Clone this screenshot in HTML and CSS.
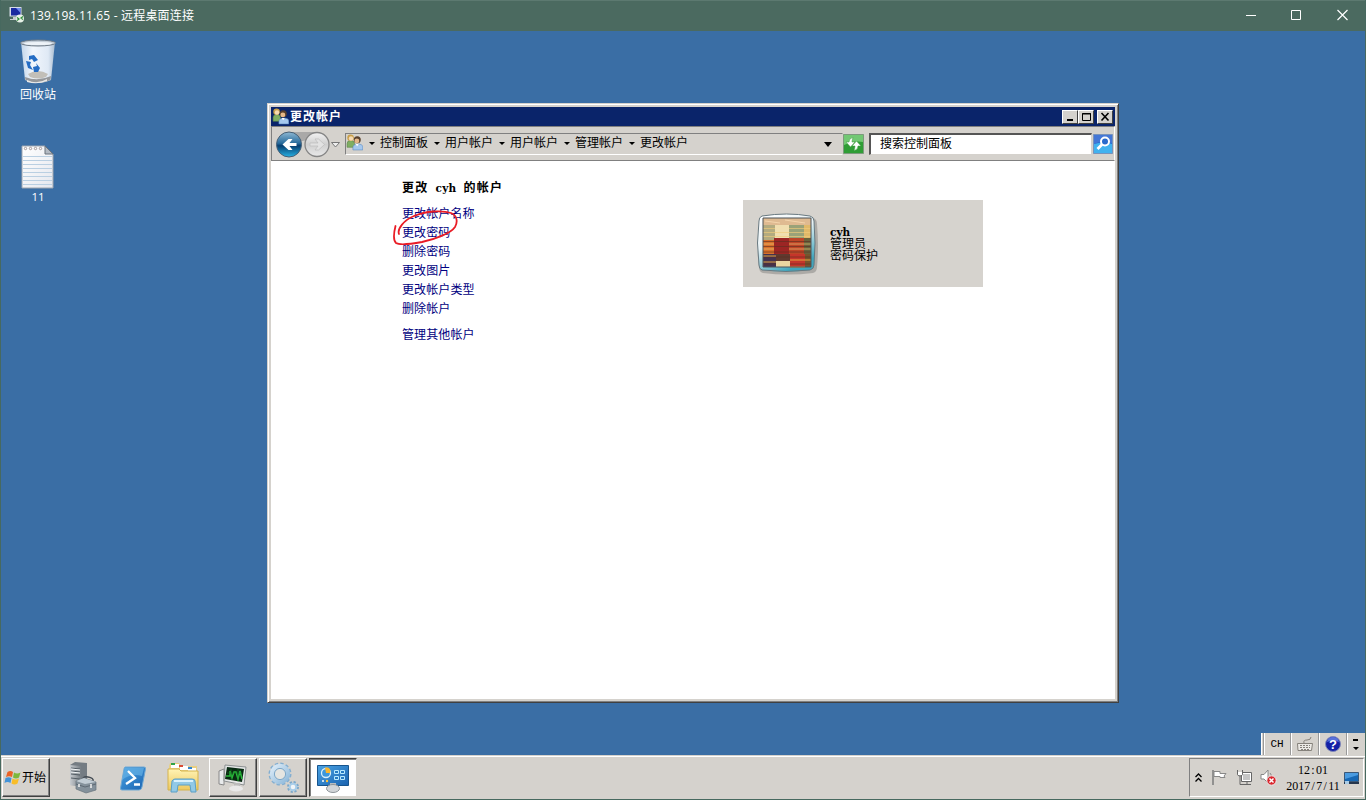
FILE: index.html
```html
<!DOCTYPE html>
<html lang="zh-CN">
<head>
<meta charset="utf-8">
<title>远程桌面连接</title>
<link rel="stylesheet" href="styles.css">
</head>
<body>
<svg class="defs" width="0" height="0">
  <defs>
    <linearGradient id="blueBall" x1="0" y1="0" x2="0" y2="1"><stop offset="0" stop-color="#8fb9d4"/><stop offset=".45" stop-color="#286b9c"/><stop offset=".55" stop-color="#063e70"/><stop offset="1" stop-color="#27b2e4"/></linearGradient>
    <linearGradient id="grayBall" x1="0" y1="0" x2="0" y2="1"><stop offset="0" stop-color="#f2f2f2"/><stop offset=".5" stop-color="#cfcfcf"/><stop offset="1" stop-color="#e9e9e9"/></linearGradient>
    <linearGradient id="bin" x1="0" y1="0" x2="1" y2="0"><stop offset="0" stop-color="#c3d6ea"/><stop offset=".35" stop-color="#f1f6fc"/><stop offset=".8" stop-color="#dfe9f5"/><stop offset="1" stop-color="#a9bccf"/></linearGradient>
    <linearGradient id="paper" x1="0" y1="0" x2="1" y2="1"><stop offset="0" stop-color="#fff"/><stop offset="1" stop-color="#e4e7ee"/></linearGradient>
    <linearGradient id="frame" x1="0" y1="0" x2=".5" y2="1"><stop offset="0" stop-color="#fff"/><stop offset=".5" stop-color="#e8f2f5"/><stop offset="1" stop-color="#3fa6bd"/></linearGradient>
    <linearGradient id="panel" x1="0" y1="0" x2="1" y2="1"><stop offset="0" stop-color="#4aa3e4"/><stop offset="1" stop-color="#1a63b0"/></linearGradient>
    <linearGradient id="steel" x1="0" y1="0" x2="1" y2="0"><stop offset="0" stop-color="#c8ccd0"/><stop offset="1" stop-color="#757d84"/></linearGradient>
    <linearGradient id="gear" x1="0" y1="0" x2="1" y2="1"><stop offset="0" stop-color="#dcebf7"/><stop offset="1" stop-color="#8fb9da"/></linearGradient>
    <linearGradient id="folder" x1="0" y1="0" x2="0" y2="1"><stop offset="0" stop-color="#fff3b4"/><stop offset="1" stop-color="#ecc85f"/></linearGradient>
    <symbol id="users" viewBox="0 0 16 16">
      <path d="M1 12.500V9q0-3 3.500-3T8 9v3.500z" fill="#7fae63" stroke="#547b42" stroke-width=".5"/>
      <circle cx="4.300" cy="3.500" r="3.100" fill="#c9a04a"/><circle cx="4.700" cy="4.300" r="2.100" fill="#f5d9b2"/>
      <path d="M6.500 15v-2q0-3.500 4.500-3.500T15.800 12v3z" fill="#a5c8ee" stroke="#5283bd" stroke-width=".5"/>
      <circle cx="10.600" cy="5.400" r="3.300" fill="#59402c"/><circle cx="10.200" cy="6.500" r="2.300" fill="#e5b889"/>
      <path d="M9 9.500l1.500 2 1.500-2z" fill="#fff"/>
    </symbol>
  </defs>
</svg>

<header class="rdp-bar">
  <svg class="rdp-icon" width="17" height="17" viewBox="0 0 17 17"><path d="M1.500 1h12v9.500h-12z" fill="#d6dce6"/><path d="M3 2h9.500v7.500H3z" fill="#1a2aa0"/><path d="M8 2h4.500v5z" fill="#6d8bef"/><path d="M5 11h4v2h3v1H2v-1h3z" fill="#c9ccd2"/><circle cx="12" cy="12.500" r="4" fill="#e8f2e8"/><path d="M9 11.500l2 1.500-2 1.500M15 10.500L13 12l2 1.500" fill="none" stroke="#2c8b36" stroke-width="1.200"/></svg>
  <span class="rdp-title">139.198.11.65 - 远程桌面连接</span>
  <svg class="rdp-controls" width="104" height="12" viewBox="0 0 104 12" fill="none" stroke="#fff"><path d="M0 6.500h10"/><path d="M45.500 1.500h9v9h-9z"/><path d="M91.500 1l10 10m0-10l-10 10" stroke-width="1.200"/></svg>
</header>

<main class="desktop">
  <div class="shortcuts">
    <div class="shortcut">
      <svg width="38" height="46" viewBox="0 0 38 46"><path d="M2 3l4 38q13 6 26 0l4-38z" fill="url(#bin)"/><path d="M9 35q10-6 20 0l-2 3q-8 3-16 0z" fill="#c2bfb8"/><path d="M6 38q13 5 26-1l-.5 4q-12.500 6-25 0z" fill="#96989b"/><path d="M8 41q10 5 20-1v2q-10 4-20 1z" fill="#e8e8e8"/><ellipse cx="19" cy="4" rx="17.500" ry="3" fill="#c4ced8" stroke="#707c88"/><ellipse cx="19" cy="4.500" rx="14" ry="1.600" fill="#eef3f8"/><g fill="#246cc4"><path d="M10 17l5-1 4 5-4 2-2-3-3 1z"/><path d="M7 22l5 1-1 3 3 5-5-2z"/><path d="M14 28l4-1-1-3 4 5-2 4-4 0z"/></g></svg>
      <span>回收站</span>
    </div>
    <div class="shortcut">
      <svg width="34" height="44" viewBox="0 0 34 44"><path d="M1 1h23l8 8v34H1z" fill="url(#paper)" stroke="#9da5af"/><path d="M24 1v8h8z" fill="#b3bac3" stroke="#69727c"/><path d="M2 11.500h29M2 15.500h29M2 19.500h29M2 23.500h29M2 27.500h29M2 31.500h29M2 35.500h29M2 39.500h29" stroke="#b9cfe2"/><g fill="#fff" stroke="#9a8e90" stroke-width=".9"><circle cx="4.500" cy="3.500" r="1.200"/><circle cx="9.500" cy="3.500" r="1.200"/><circle cx="14.500" cy="3.500" r="1.200"/><circle cx="19.500" cy="3.500" r="1.200"/></g></svg>
      <span class="latin-name">11</span>
    </div>
  </div>

  <section class="window">
    <div class="titlebar">
      <svg width="17" height="17"><use href="#users"/></svg>
      <h1>更改帐户</h1>
      <div class="win-buttons">
        <i><svg width="12" height="10"><path d="M3 7h6v2H3z"/></svg></i><i><svg width="12" height="10"><path d="M2.500 1.500h8v7h-8zM2 2h9" fill="none" stroke="#000"/></svg></i><i class="close"><svg width="12" height="10"><path d="M2.500 1l7 7.500m0-7.500l-7 7.500" stroke="#000" stroke-width="1.600"/></svg></i>
      </div>
    </div>
    <nav class="toolbar">
      <svg class="travel" width="70" height="30" viewBox="0 0 70 30"><path d="M13 3h29l-5 9q-8-2-14 2z" fill="#aaa9a8"/><circle cx="14" cy="15.500" r="12.500" fill="url(#blueBall)" stroke="#465f75"/><path d="M21.500 14v3h-7l3 4h-4l-6-5.500 6-5.500h4l-3 4z" fill="#fff"/><circle cx="42" cy="15.500" r="12" fill="url(#grayBall)" stroke="#858585" stroke-width="1.300"/><path d="M35 14v3h8l-3 4h3.500l6-5.500-6-5.500H40l3 4z" fill="#e2e2e2" stroke="#bbb" stroke-width=".7"/><path d="M56.500 13.500h8l-4 4.500z" fill="#eee" stroke="#777"/></svg>
      <div class="address">
        <svg width="17" height="17"><use href="#users"/></svg>
        <span class="crumb">控制面板</span><span class="crumb">用户帐户</span><span class="crumb">用户帐户</span><span class="crumb">管理帐户</span><span class="crumb">更改帐户</span>
        <i class="drop"></i>
      </div>
      <svg class="refresh" width="21" height="20" viewBox="0 0 21 20"><path d="M.5 .5h20v19H.5z" fill="#2f9d35" stroke="#7d9a7d"/><path d="M1 1h19v7q-8-2-19 3z" fill="#72c873"/><path d="M10 3.500Q6 4 6 8H3l4.500 5L12 8H9q0-2 1-4.500zM11 16.500q4-.5 4-4.500h3l-4.500-5L9 12h3q0 2-1 4.500z" fill="#fff" stroke="#3b9b3d" stroke-width=".5"/></svg>
      <div class="search">搜索控制面板</div>
      <svg class="go" width="20" height="20" viewBox="0 0 20 20"><path d="M.5 .5h19v19H.5z" fill="#246bd0" stroke="#7893bb"/><path d="M1 10q9-3 18 0v9H1z" fill="#41b2ef"/><path d="M1 1h18v8Q9 6 1 10z" fill="#4477d6"/><circle cx="12" cy="7.500" r="4" fill="#286acc" stroke="#fff" stroke-width="2"/><path d="M9 10.500L4.500 15" stroke="#fff" stroke-width="2.800"/></svg>
    </nav>
    <div class="content">
      <div class="tasks">
        <h2>更改 <b class="latin">cyh</b> 的帐户</h2>
        <a>更改帐户名称</a><a>更改密码</a><a>删除密码</a><a>更改图片</a><a>更改帐户类型</a><a>删除帐户</a>
        <a class="other">管理其他帐户</a>
        <svg class="scribble" width="70" height="40" viewBox="0 0 70 40" fill="none" stroke="#e91c25" stroke-width="1.800" stroke-linecap="round"><path d="M3.500 17C2 23 1 31 4 34c3 2 15 1 26-1 14-3 29-9 33-15 3-5 2-12-4-14C50 1 34 2 22 7 12 11 5 20 7 25"/></svg>
      </div>
      <div class="account">
        <svg width="66" height="66" viewBox="0 0 66 66"><path d="M7 7q25-4 50 0 4 1 4 6 2 22 0 43 0 5-4 6-25 3-50 0-4-1-4-6-3-21 0-43 0-5 4-6z" fill="#9a9895" opacity=".7"/><path d="M6 5q25-4 48 0 4 1 4 5 2 22 0 44 0 4-4 5-24 3-48 0-3-1-3-5-3-22 0-44 0-4 3-5z" fill="url(#frame)" stroke="#697980"/><g transform="translate(-1)"><path d="M8 7h48v49H8z" fill="#ad5936"/><path d="M8 7h48v7H8z" fill="#dfba91"/><path d="M8 14h12v15H8z" fill="#b3ab80"/><path d="M20 14h14v15H20z" fill="#f0deb0"/><path d="M34 14h15v13H34z" fill="#9aa278"/><path d="M49 14h7v13h-7z" fill="#e1b969"/><path d="M8 29h11v14H8z" fill="#d8702b"/><path d="M19 27h15v16H19z" fill="#9c2524"/><path d="M34 27h15v16H34z" fill="#bd4527"/><path d="M49 27h7v16h-7z" fill="#68623c"/><path d="M8 43h13v13H8z" fill="#433250"/><path d="M21 43h14v7H21z" fill="#5f392f"/><path d="M21 50h14v6H21z" fill="#e9d5a1"/><path d="M35 43h15v13H35z" fill="#c5352b"/><path d="M50 43h6v13h-6z" fill="#77552c"/><path d="M8 17.500h12m14 0h22M8 21.500h48M8 25.500h48M8 33h11m15 0h22M8 38h11m15 0h22" stroke="#f0cc7c" opacity=".65"/><path d="M8 30.500h48M8 35.500h48M8 41h48M8 46h48M8 53h13m14 0h21" stroke="#5c2e22" opacity=".6"/><path d="M8 45h13m14 4h21M8 51h13m14 5h15" stroke="#e5a43e"/><path d="M10 10l15 2m5-3l20 3" stroke="#f3d4ac"/><path d="M8 7h48v49H8z" fill="none" stroke="#4d5359"/></g></svg>
        <div class="details"><b class="latin">cyh</b><span>管理员</span><span>密码保护</span></div>
      </div>
    </div>
  </section>

  <aside class="langbar">
    <span class="lang">CH</span>
    <span><svg width="18" height="16" fill="none" stroke="#85817b"><path d="M1.500 7.500h15l-1 7H2z" fill="#eceae6"/><path d="M4 9.500h10M4 11.500h10M5 13.500h8" stroke-dasharray="2 1"/><path d="M8 7q-1-3 3-3t4-3"/></svg></span>
    <span><svg width="18" height="18"><circle cx="9" cy="9" r="7.500" fill="#1420a6" stroke="#8088b9"/><path d="M3 7q1-5 6-5t6 5q-6-3-12 0z" fill="#5871da"/><text x="9" y="13.500" text-anchor="middle" class="help-mark">?</text></svg></span>
    <span class="options"><svg width="8" height="18"><path d="M1 4h5v2H1zM1 12h6l-3 3z"/></svg></span>
  </aside>
</main>

<footer class="taskbar">
  <div class="start"><svg width="18" height="17" viewBox="0 0 17 17"><path d="M3 3q3-2 5.500 0L7.500 8Q4.500 6.500 1.500 8z" fill="#ea6225"/><path d="M9.500 3.500q3 2 6.500 0L14.500 8.500q-3 2-6 0z" fill="#7db83b"/><path d="M1 9q3-1.500 6 0l-1 5q-3-2-6 0z" fill="#4293d8"/><path d="M8 9.500q3 2 6.500 0L13 14.500q-3 2-6 0z" fill="#f8bd28"/></svg>开始</div>
  <div class="launch">
    <div class="app"><svg width="32" height="34" viewBox="0 0 32 34"><path d="M3 4l5-3 12 1v23L3 24z" fill="#747c83"/><path d="M3 4l11 1v21L3 24z" fill="url(#steel)"/><path d="M4 7l9 1M4 10l9 1M4 13l9 1M4 17l9 1" stroke="#535d65"/><path d="M4 8l9 1M4 11l9 1" stroke="#f0f3f5"/><path d="M15 20q0-5 6-4t5 4" fill="none" stroke="#444c54" stroke-width="1.500"/><path d="M9 20l8-3 12 4v8l-10 3-10-4z" fill="#84919b" stroke="#66727b" stroke-width=".7"/><path d="M9 20l8-3 12 4-11 2z" fill="#c1ccd4"/><path d="M9 23l9 3 11-3" fill="none" stroke="#56616b" stroke-width=".8"/><path d="M12 23v3M24 23v4" stroke="#f2f2f2" stroke-width="1.500"/></svg></div>
    <div class="app"><svg width="28" height="26" viewBox="0 0 28 26"><path d="M6 2h19q2 0 1.500 2L23 22q-.5 3-3 3H3q-2 0-1.500-2L5 4q0-1 1-2z" fill="url(#panel)" stroke="#71a9d4"/><path d="M6 3h19l-2 8Q12 8 3 15z" fill="#68b3e7" opacity=".65"/><path d="M9 6l7 7-9 6M15 19.500h6" fill="none" stroke="#fff" stroke-width="2.300"/></svg></div>
    <div class="app"><svg width="34" height="33" viewBox="0 0 34 33"><path d="M3 5l1-3h9l2 3h16v20H3z" fill="#e8cf83"/><path d="M5 3h8v4H5zM14 5h8v4h-8zM22 7h8v4h-8z" fill="#fff"/><path d="M5 2h4v2H5z" fill="#30a347"/><path d="M13 4h4v2h-4z" fill="#d94b36"/><path d="M22 6h4v2h-4z" fill="#3287d1"/><path d="M2 8h11l2 2h17v19H2z" fill="url(#folder)" stroke="#d5b34c"/><path d="M5 31l1-11q1-2 3-2h17q3 0 3 2l1 11h-5l-1-7H12l-1 7z" fill="#91c9e6" stroke="#5b9fc6"/><path d="M8 20h19" stroke="#d9f1fc" stroke-width="2"/></svg></div>
    <div class="app open"><svg width="32" height="30" viewBox="0 0 32 30"><path d="M2 8l5-2v16l-5-1z" fill="#e9ebec" stroke="#888"/><path d="M8 2l21 2-2 18-20-4z" fill="#e5e7e7" stroke="#8b8f90"/><path d="M10 4l17 2-2 13-17-3z" fill="#092a12"/><path d="M9 13h4V8l2 7 2-6h2l2 7 2-8 2 8" fill="none" stroke="#28b83a" stroke-width="1.500"/><path d="M10 10h15M14 6v10M21 6v12" stroke="#1a7326" stroke-width=".6"/><path d="M17 20h6v5h-6z" fill="#bbb"/><ellipse cx="19" cy="25.500" rx="7" ry="3" fill="#e9e9e9"/></svg></div>
    <div class="app open"><svg width="34" height="32" viewBox="0 0 34 32"><circle cx="14" cy="12" r="9.500" fill="none" stroke="#83aed0" stroke-width="4" stroke-dasharray="3 1.970"/><circle cx="14" cy="12" r="8" fill="none" stroke="url(#gear)" stroke-width="4.500"/><circle cx="14" cy="12" r="5.600" fill="#e5e5e1" stroke="#7ca8ca"/><circle cx="27" cy="25" r="4.500" fill="none" stroke="#7ca8ca" stroke-width="3" stroke-dasharray="2 1.530"/><circle cx="27" cy="25" r="3.300" fill="#f1f5f7" stroke="#a8cde8" stroke-width="2"/></svg></div>
    <div class="app active"><svg width="34" height="31" viewBox="0 0 34 31"><path d="M1.500 3.500h31v20h-31z" fill="url(#panel)" stroke="#17558e"/><circle cx="10" cy="11" r="4.500" fill="#3c97dc" stroke="#d8effb" stroke-width="1.300"/><path d="M9 5.500h3a4.500 4.500 0 012 5.500h-4z" fill="#f9b52d"/><path d="M18.500 8.500h4v3h-4zm6 0h4v3h-4zm-6 6h4v3h-4zm6 0h4v3h-4z" fill="#267bc2" stroke="#b8e9ff"/><circle cx="7" cy="19" r="1" fill="#fff"/><circle cx="11" cy="19" r="1.200" fill="#ffc43d"/><path d="M14 21h6v6h-6z" fill="#b9bdc0"/><ellipse cx="17" cy="26.500" rx="6.500" ry="4" fill="#d2d5d8" stroke="#8f959a"/></svg></div>
  </div>
  <div class="tray">
    <svg class="more" width="7" height="10" fill="none" stroke="#000" stroke-width="1.300"><path d="M.5 4l3-3 3 3M.5 8.500l3-3 3 3"/></svg>
    <svg class="flag" width="17" height="17"><path d="M2 1v15" stroke="#8a8a8a" stroke-width="1.800"/><path d="M3 2.500h6v2h6l-2 2.500 1 1.500H9v-1H3z" fill="#fff" stroke="#888"/></svg>
    <svg class="net" width="17" height="17"><path d="M5.500 3.500h10v9h-10z" fill="#fff" stroke="#666"/><path d="M7 5h7v6H7z" fill="#c5c5c5"/><path d="M7 15.500h8M11 13v2" stroke="#666"/><path d="M1.500 1v4q0 2 2.500 2t2.500-2V1M4 7v8.500h3" fill="none" stroke="#666"/><path d="M2 3h4v3H2z" fill="#fff"/></svg>
    <svg class="sound" width="17" height="17"><path d="M1 5.500h3L8 1v13l-4-4H1z" fill="#fff" stroke="#888"/><path d="M10 4q2 2 1 4" fill="none" stroke="#888"/><circle cx="11.500" cy="11.500" r="4.700" fill="#d9272e" stroke="#eee"/><path d="M9.500 9.500l4 4m0-4l-4 4" stroke="#fff" stroke-width="1.500"/></svg>
    <div class="clock"><span>12<i>:</i>01</span><span>2017<i>/</i>7<i>/</i>11</span></div>
    <svg class="show-desktop" width="15" height="14"><path d="M.5 1.500h14v9H.5z" fill="#1768b4" stroke="#3b5877"/><path d="M1 2h13v2L1 8z" fill="#4a9be0"/><path d="M0 11h15v2H0z" fill="#26364c"/><path d="M1 10h4v3H1z" fill="#a9cce7"/></svg>
  </div>
</footer>
</body>
</html>
```
FILE: styles.css
```css
* { box-sizing: border-box; }
body {
  margin: 0;
  width: 1366px;
  height: 800px;
  overflow: hidden;
  display: flex;
  flex-direction: column;
  background: #3a6ea5;
  border: solid #47695f;
  border-width: 0 1px 1px;
  color: #000;
  font: 12px/14px "Liberation Serif", "Noto Sans CJK SC", sans-serif;
}
svg { display: block; flex: none; }
h1, h2 { margin: 0; font-size: 12px; line-height: 16px; }
i { font-style: normal; }
.defs { position: absolute; }
.latin { font-family: "DejaVu Serif", serif; font-size: 10.500px; letter-spacing: 0; }

.rdp-bar {
  height: 31px;
  flex: none;
  display: flex;
  align-items: center;
  padding: 0 15px 0 7px;
  background: #4b6a60;
  border-top: 1px solid #5c7970;
  color: #fff;
}
.rdp-icon { margin-bottom: 3px; }
.rdp-title { margin-left: 5px; font: 12px/18px "Open Sans", "Noto Sans CJK SC", sans-serif; letter-spacing: .18px; }
.rdp-controls { margin-left: auto; margin-bottom: 2px; }

.desktop { position: relative; flex: 1; }
.shortcuts { display: flex; flex-direction: column; width: 74px; padding-top: 8px; gap: 44px; }
.shortcut { display: flex; flex-direction: column; align-items: center; gap: 2px; color: #fff; line-height: 14px; }
.shortcut span { font-family: "Noto Sans CJK SC", sans-serif; font-size: 12px; }
.shortcut .latin-name { font: 11.500px/12px "Open Sans", sans-serif; }

.window {
  position: absolute;
  left: 266px;
  top: 72px;
  width: 852px;
  height: 600px;
  display: flex;
  flex-direction: column;
  padding: 2px;
  background: #d5d2cd;
  border: 1px solid #d5d2cd;
  border-right-color: #404040;
  border-bottom-color: #404040;
  box-shadow: inset 1px 1px #fff, inset -1px -1px #808080;
}
.titlebar { height: 19px; flex: none; display: flex; align-items: center; margin: 1px 1px 0; padding: 0 2px 0 1px; background: #0a246a; color: #fff; }
.titlebar h1 { margin-left: 1px; letter-spacing: 1px; font-weight: 700; padding-bottom: 0; }
.win-buttons { display: flex; margin-left: auto; }
.win-buttons i {
  width: 16px;
  height: 14px;
  padding: 1px;
  background: #d5d2cd;
  border: 1px solid;
  border-color: #fff #404040 #404040 #fff;
}
.win-buttons .close { margin-left: 3px; }

.toolbar {
  height: 35px;
  flex: none;
  display: flex;
  align-items: center;
  margin: 0 1px;
  padding: 0 1px 0 3px;
  background: #d5d2cd;
  border: 1px solid #808080;
  border-right-color: #fff;
}
.travel { margin-right: 0; }
.address {
  width: 498px;
  height: 22px;
  display: flex;
  align-items: center;
  padding-bottom: 2px;
  border: 1px solid;
  border-color: #808080 #d5d2cd #fff #808080;
  line-height: 18px;
}
.crumb { display: flex; align-items: center; }
.crumb::before { content: ""; width: 0; margin: 1px 5px 0 6px; border: solid transparent; border-width: 3px 3px 0; border-top-color: #000; }
.drop { margin: 4px 10px 0 auto; border: solid transparent; border-width: 5px 4px 0; border-top-color: #000; }
.search { flex: 1; height: 22px; margin: 0 1px 0 5px; padding-left: 9px; line-height: 19px; background: #fff; border: solid #d5d2cd; border-width: 2px 1px 1px 2px; border-top-color: #555; border-left-color: #555; }
.content { flex: 1; display: flex; align-items: flex-start; margin: 0 1px 1px; padding: 18px 0 0 131px; background: #fff; }
.tasks { position: relative; width: 341px; display: flex; flex-direction: column; color: #000080; letter-spacing: .1px; }
.tasks h2 { height: 26px; line-height: 18px; color: #000; letter-spacing: 1.200px; white-space: pre; word-spacing: 3px; }
.tasks .latin { letter-spacing: .2px; }
.tasks a { height: 19px; line-height: 19px; }
.tasks .other { margin-top: 7px; }
.scribble { position: absolute; left: -10px; top: 30px; }
.account { width: 240px; height: 87px; display: flex; align-items: center; margin-top: 21px; padding-left: 13px; background: #d6d3ce; }
.details { display: flex; flex-direction: column; margin-left: 8px; line-height: 12px; }
.details .latin { line-height: 12px; }

.langbar { position: absolute; right: 0; bottom: 0; height: 22px; width: 104px; display: flex; align-items: stretch; background: #d5d2cd; border-left: 1px solid #fff; }
.langbar span { display: flex; flex: none; align-items: center; justify-content: center; width: 28px; border-left: 1px solid #999; box-shadow: inset 1px 0 #fff; }
.langbar .lang { margin-left: 1px; width: 27px; font: 11px "Liberation Mono", monospace; }
.langbar .options { width: 19px; }
.help-mark { fill: #fff; font: bold 13px "Liberation Sans", sans-serif; }

.taskbar { height: 44px; flex: none; display: flex; background: #d5d2cd; border-top: 1px solid #d5d2cd; box-shadow: inset 0 1px #fff; padding: 2px 1px 2px; }
.start { width: 48px; height: 39px; display: flex; align-items: center; padding-left: 1px; border: 1px solid; border-color: #fff #404040 #404040 #fff; box-shadow: inset -1px -1px #808080; }
.launch { display: flex; margin-left: 9px; gap: 2px; }
.app { width: 48px; height: 39px; display: flex; align-items: center; justify-content: center; }
.open { border: 1px solid; border-color: #fff #404040 #404040 #fff; box-shadow: inset -1px -1px #808080; }
.active { background: #fff; border: 1px solid; border-color: #404040 #d5d2cd #d5d2cd #404040; box-shadow: inset 1px 1px #808080; }
.tray { width: 175px; height: 39px; display: flex; align-items: center; margin-left: auto; padding-left: 5px; border: 1px solid; border-color: #808080 #fff #fff #808080; }
.flag { margin-left: 9px; }
.net { margin-left: 8px; }
.sound { margin-left: 7px; }
.clock { width: 56px; margin-left: 8px; display: flex; flex-direction: column; align-items: center; line-height: 16px; }
.clock i { display: inline-block; width: 6px; text-align: center; }
.show-desktop { margin-left: 3px; }
```
